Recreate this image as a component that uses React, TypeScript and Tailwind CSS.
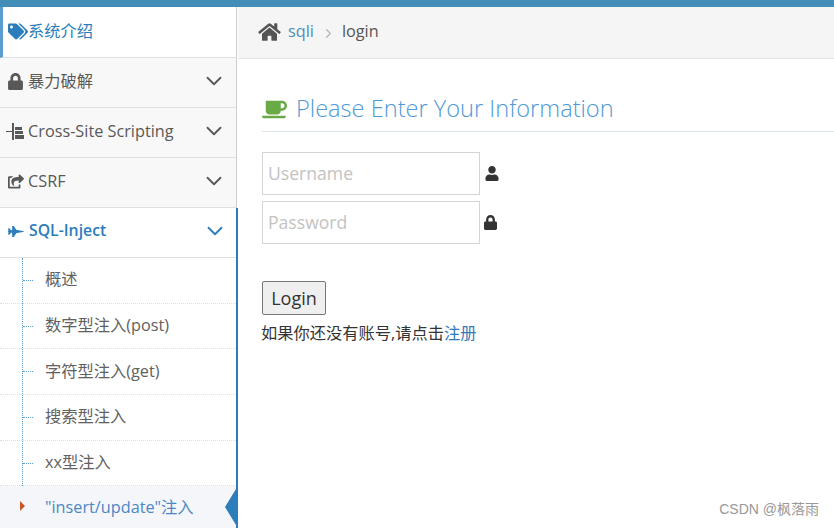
import { FaCoffee, FaFighterJet, FaHome, FaLock, FaShareSquare, FaTags, FaUser } from "react-icons/fa";
import { FiChevronDown, FiChevronRight } from "react-icons/fi";
import type { ReactNode } from "react";

const font = "font-['Open_Sans','Noto_Sans_CJK_SC',sans-serif]";

function NavItem({ icon, label }: { icon: ReactNode; label: string }) {
  return (
    <div className="flex h-[50px] items-center border-b border-[#e0e0e0] bg-[#f8f8f8] pb-[3px] pl-2 pr-[9px] text-[#585858]">
      <span className="flex w-[20px] shrink-0 items-center">{icon}</span>
      <span className="flex-1 text-[16.25px]">{label}</span>
      <FiChevronDown className="h-[26px] w-[26px]" strokeWidth={1.7} />
    </div>
  );
}

// the tree icon of the Cross-Site Scripting row
function TreeIcon() {
  return (
    <svg viewBox="0 0 18 17" className="h-[17px] w-[18px] -ml-[2px]" fill="currentColor">
      <rect x="0" y="8" width="6" height="1" />
      <rect x="6" y="0" width="2" height="17" />
      <rect x="9" y="4" width="7" height="3" />
      <rect x="9" y="8" width="8" height="3" />
      <rect x="9" y="12" width="9" height="4" />
    </svg>
  );
}

const subItems = ["概述", "数字型注入(post)", "字符型注入(get)", "搜索型注入", "xx型注入"];

function Sidebar() {
  return (
    <aside className="w-[238px] shrink-0">
      <div className="w-[237px] border-r border-[#cccccc]">
        <div className="flex h-[51px] items-center border-b border-[#e0e0e0] border-l-[3px] border-l-[#5a9ecf] bg-white pb-[2px] pl-[5px] text-[#2b7dbc]">
          <FaTags className="h-[19px] w-[20px]" />
          <span className="text-[16.25px]">系统介绍</span>
        </div>
        <NavItem icon={<FaLock className="h-[17px] w-[15px]" />} label="暴力破解" />
        <NavItem icon={<TreeIcon />} label="Cross-Site Scripting" />
        <NavItem icon={<FaShareSquare className="h-[15px] w-[16px]" />} label="CSRF" />
      </div>
      <div className="h-[320px] w-[238px] border-r-2 border-[#2b7dbc]">
        <div className="flex h-[50px] items-center border-b border-[#e0e0e0] bg-white pb-[3px] pl-2 pr-[8px] text-[#2b7dbc]">
          <span className="flex w-[21px] shrink-0 items-center">
            <FaFighterJet className="h-[15px] w-[16px]" />
          </span>
          <span className="flex-1 text-[15.8px] font-semibold">SQL-Inject</span>
          <FiChevronDown className="h-[26px] w-[26px]" strokeWidth={1.7} />
        </div>
        <div className="relative">
          <div className="absolute bottom-0 left-[22px] top-0 border-l border-dotted border-[#5a9ecf]" />
          {subItems.map((item) => (
            <div key={item} className="relative flex h-[45.7px] items-center border-b border-dotted border-[#dddddd] pb-[2px] pl-[45px] text-[16.25px] text-[#616161]">
              <span className="absolute left-[23px] top-[22px] w-[10px] border-t border-dotted border-[#5a9ecf]" />
              {item}
            </div>
          ))}
          <div className="relative flex h-[42px] items-center bg-[#f4f6fa] pl-[45px] text-[16.25px] text-[#4b88c4]">
            <span className="absolute left-[20px] top-[15px] h-0 w-0 border-y-[5px] border-l-[5px] border-y-transparent border-l-[#c8552b]" />
            &quot;insert/update&quot;注入
            <span className="absolute right-0 top-[3px] h-0 w-0 border-y-[18px] border-r-[11px] border-y-transparent border-r-[#2b7dbc]" />
          </div>
        </div>
      </div>
    </aside>
  );
}

export default function App() {
  return (
    <div className={`${font} h-[528px] w-[834px] overflow-hidden bg-white`}>
      <div className="h-[7px] bg-[#438eb9]" />
      <div className="flex">
        <Sidebar />
        <main className="relative min-w-0 flex-1">
          <div className="flex h-[52px] items-center border-b border-[#e5e5e5] bg-[#f5f5f5] pb-[2px] pl-[20px] text-[16.25px]">
            <FaHome className="h-[20px] w-[23px] text-[#555555]" />
            <span className="ml-[7px] text-[#4c8fbd]">sqli</span>
            <FiChevronRight className="ml-[7px] mt-[3px] h-[15px] w-[15px] text-[#b2b6bf]" />
            <span className="ml-[6px] text-[#555555]">login</span>
          </div>
          <div className="pl-[24px] pt-[31px]">
            <h1 className="flex h-[42px] items-center border-b border-[#dce8f1] pb-[3px] text-[23.6px] font-light text-[#4f99d6]">
              <FaCoffee className="mr-[9px] h-[21px] w-[25px] text-[#69aa46]" />
              Please Enter Your Information
            </h1>
            <form className="mt-[20px] flex flex-col gap-[6px]">
              <div className="flex items-center gap-[5px]">
                <input placeholder="Username" className="h-[43px] w-[218px] border border-[#d5d5d5] px-[5px] pb-[2px] text-[17.6px] text-[#333333] outline-none placeholder:text-[#c3c3c3]" />
                <FaUser className="h-[15px] w-[14px] text-[#333333]" />
              </div>
              <div className="flex items-center gap-[4px]">
                <input type="password" placeholder="Password" className="h-[43px] w-[218px] border border-[#d5d5d5] px-[5px] pb-[2px] text-[17.6px] text-[#333333] outline-none placeholder:text-[#c3c3c3]" />
                <FaLock className="h-[15px] w-[13px] text-[#333333]" />
              </div>
              <button type="button" className="mt-[31px] h-[34px] w-[64px] rounded-[2px] border border-[#767676] bg-[#efefef] text-lg text-[#333333]">
                Login
              </button>
            </form>
            <p className="mt-[6px] -ml-px text-[16.25px] text-[#333333]">
              如果你还没有账号,请点击<span className="text-[#337ab7]">注册</span>
            </p>
          </div>
          <div className="absolute bottom-[8px] right-[15px] font-['Liberation_Sans','Noto_Sans_CJK_SC',sans-serif] text-[14px] text-[#999999]">CSDN @枫落雨</div>
        </main>
      </div>
    </div>
  );
}
